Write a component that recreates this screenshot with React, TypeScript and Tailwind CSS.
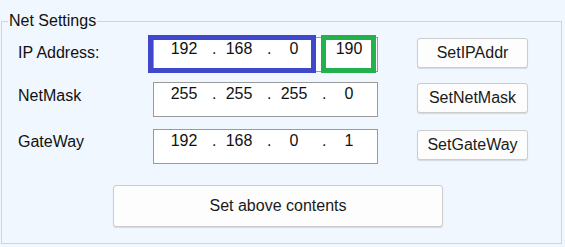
import React from "react";

function Octets({ values }: { values: string[] }) {
  return (
    <div className="flex pl-[12px] pt-[2px] leading-[18px]">
      {values.map((v, i) => (
        <React.Fragment key={i}>
          <span className="w-[36px] text-center">{v}</span>
          {i < 3 && <span className="w-[19px] pl-[10px]">.</span>}
        </React.Fragment>
      ))}
    </div>
  );
}

function Row({
  label,
  values,
  button,
  labelTop,
  highlight,
  className,
}: {
  label: string;
  values: string[];
  button: string;
  labelTop: string;
  highlight?: boolean;
  className: string;
}) {
  return (
    <div className={`flex items-start ${className}`}>
      <div className={`w-[145px] pl-[10px] leading-[18px] ${labelTop}`}>{label}</div>
      <div className="relative h-[35px] w-[225px] border border-[#9a9a9a] bg-white">
        <Octets values={values} />
        {highlight && (
          <>
            <div className="absolute left-[-6px] top-[-3px] h-[38px] w-[168px] border-[5px] border-[#3f48cc]" />
            <div className="absolute left-[167px] top-[-3px] h-[38px] w-[55px] border-[5px] border-[#22b14c]" />
          </>
        )}
      </div>
      <button className="ml-[39px] mt-[1px] h-[30px] w-[111px] rounded-[3px] border border-[#cccccc] bg-[#fdfdfd] text-center leading-[18px] text-[#1a1a1a] shadow-[0_1px_1px_rgba(0,0,0,0.12)]">
        {button}
      </button>
    </div>
  );
}

export default function App() {
  return (
    <div
      className="h-[247px] w-[565px] overflow-hidden bg-[#f0f7fe] text-[16px] text-[#111]"
      style={{ fontFamily: '"Liberation Sans", Arial, sans-serif' }}
    >
      <fieldset className="ml-[1px] mt-[12px] w-[561px] border border-[#d2d5d8] pb-[16px] pl-[6px]">
        <legend className="px-[1px] leading-[18px] text-[#111]">Net Settings</legend>
        <Row
          className="mt-[7px]"
          label="IP Address:"
          values={["192", "168", "0", "190"]}
          button="SetIPAddr"
          labelTop="mt-[7px]"
          highlight
        />
        <Row
          className="mt-[10px]"
          label="NetMask"
          values={["255", "255", "255", "0"]}
          button="SetNetMask"
          labelTop="mt-[5px]"
        />
        <Row
          className="mt-[12px]"
          label="GateWay"
          values={["192", "168", "0", "1"]}
          button="SetGateWay"
          labelTop="mt-[4px]"
        />
        <button className="ml-[105px] mt-[21px] block h-[42px] w-[330px] rounded-[3px] border border-[#cccccc] bg-[#fdfdfd] text-center leading-[18px] text-[#1a1a1a] shadow-[0_1px_1px_rgba(0,0,0,0.12)]">
          Set above contents
        </button>
      </fieldset>
    </div>
  );
}
